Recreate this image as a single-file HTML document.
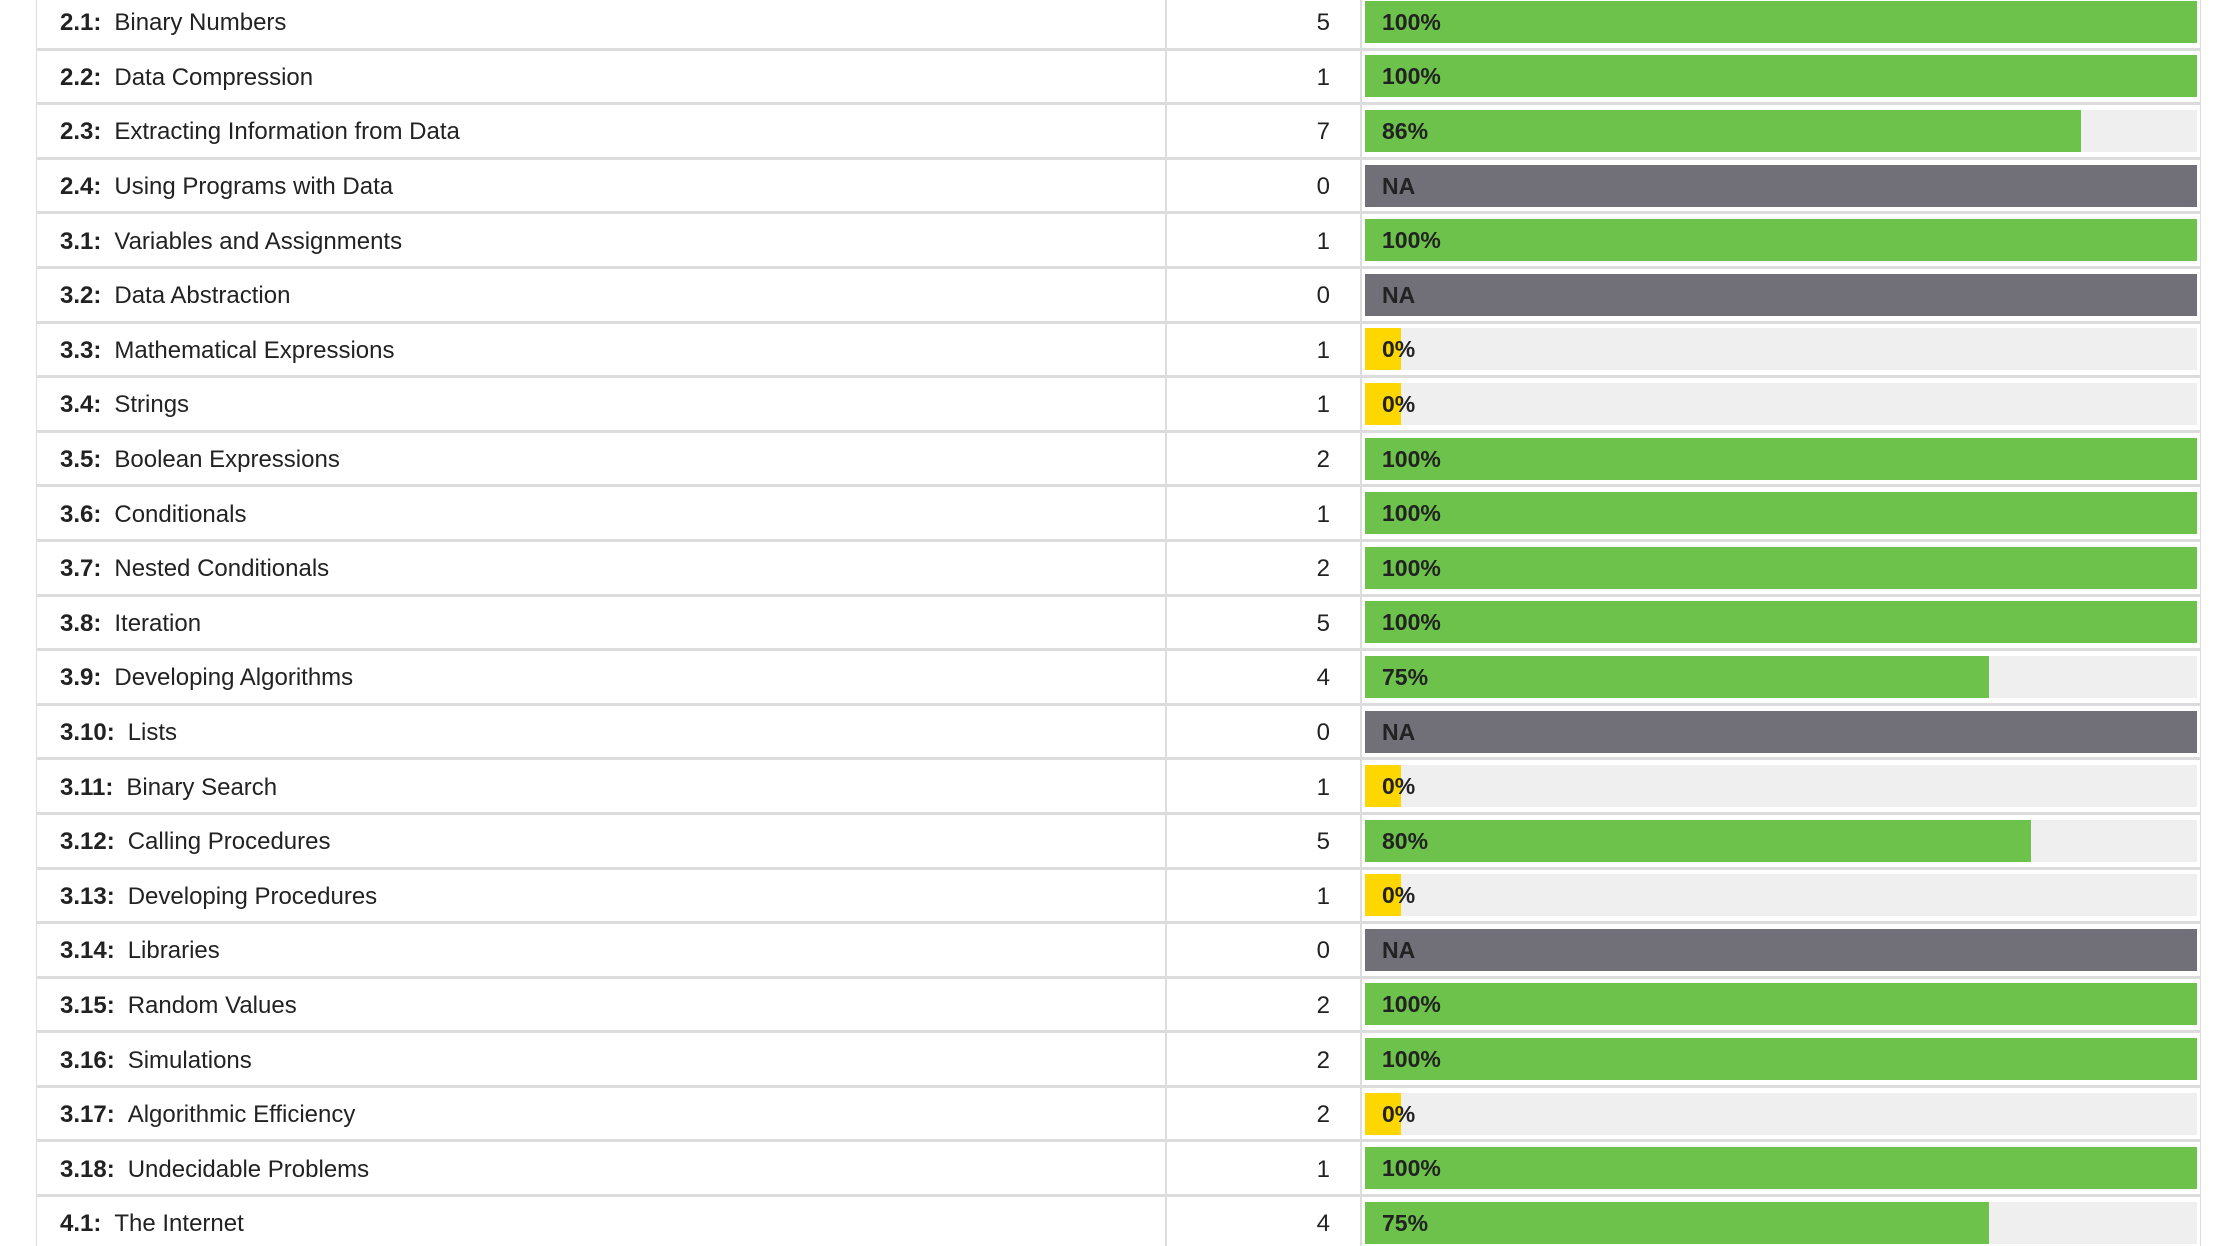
<!DOCTYPE html>
<html><head><meta charset="utf-8"><style>
html,body{margin:0;padding:0;background:#fff;width:2233px;height:1246px;overflow:hidden;font-family:"Liberation Sans",Arial,sans-serif;color:#222;}
.t{position:absolute;left:36px;top:-4px;width:2163px;height:1250px;overflow:hidden;border-left:1px solid #ddd;border-right:1px solid #ddd;}
.r{display:flex;height:51.6px;border-bottom:3px solid #dcdcdc;}
.r.last{border-bottom-color:#fff;}
.c1{display:flex;align-items:center;padding-left:23px;padding-top:3px;font-size:24px;box-sizing:border-box;width:1130px;border-right:2px solid #ddd;}
.c1 b{margin-right:13px;}
.c2{width:195px;border-right:2px solid #ddd;display:flex;align-items:center;justify-content:flex-end;padding-right:30px;padding-top:3px;box-sizing:border-box;font-size:24px;}
.c3{flex:1;display:flex;align-items:center;padding:0 3px 0 3px;}
.tr{position:relative;width:100%;height:42px;background:#efefef;}
.f{position:absolute;left:0;top:0;bottom:0;}
.g{background:#6cc24a}.y{background:#ffd700}.n{background:#717079}
.tr span{position:absolute;left:17px;top:0;line-height:42px;font-weight:bold;font-size:23px;color:#222;}
.cols{position:absolute;top:0;bottom:0;border-right:2px solid #ddd;}
</style></head><body><div class="t">
<div class="cols" style="left:0;width:1128px"></div><div class="cols" style="left:0;width:1323px"></div>
<div class="r"><div class="c1"><b>2.1:</b>Binary Numbers</div><div class="c2">5</div><div class="c3"><div class="tr"><div class="f g" style="width:100%"></div><span>100%</span></div></div></div>
<div class="r"><div class="c1"><b>2.2:</b>Data Compression</div><div class="c2">1</div><div class="c3"><div class="tr"><div class="f g" style="width:100%"></div><span>100%</span></div></div></div>
<div class="r"><div class="c1"><b>2.3:</b>Extracting Information from Data</div><div class="c2">7</div><div class="c3"><div class="tr"><div class="f g" style="width:86%"></div><span>86%</span></div></div></div>
<div class="r"><div class="c1"><b>2.4:</b>Using Programs with Data</div><div class="c2">0</div><div class="c3"><div class="tr"><div class="f n" style="width:100%"></div><span>NA</span></div></div></div>
<div class="r"><div class="c1"><b>3.1:</b>Variables and Assignments</div><div class="c2">1</div><div class="c3"><div class="tr"><div class="f g" style="width:100%"></div><span>100%</span></div></div></div>
<div class="r"><div class="c1"><b>3.2:</b>Data Abstraction</div><div class="c2">0</div><div class="c3"><div class="tr"><div class="f n" style="width:100%"></div><span>NA</span></div></div></div>
<div class="r"><div class="c1"><b>3.3:</b>Mathematical Expressions</div><div class="c2">1</div><div class="c3"><div class="tr"><div class="f y" style="width:36px"></div><span>0%</span></div></div></div>
<div class="r"><div class="c1"><b>3.4:</b>Strings</div><div class="c2">1</div><div class="c3"><div class="tr"><div class="f y" style="width:36px"></div><span>0%</span></div></div></div>
<div class="r"><div class="c1"><b>3.5:</b>Boolean Expressions</div><div class="c2">2</div><div class="c3"><div class="tr"><div class="f g" style="width:100%"></div><span>100%</span></div></div></div>
<div class="r"><div class="c1"><b>3.6:</b>Conditionals</div><div class="c2">1</div><div class="c3"><div class="tr"><div class="f g" style="width:100%"></div><span>100%</span></div></div></div>
<div class="r"><div class="c1"><b>3.7:</b>Nested Conditionals</div><div class="c2">2</div><div class="c3"><div class="tr"><div class="f g" style="width:100%"></div><span>100%</span></div></div></div>
<div class="r"><div class="c1"><b>3.8:</b>Iteration</div><div class="c2">5</div><div class="c3"><div class="tr"><div class="f g" style="width:100%"></div><span>100%</span></div></div></div>
<div class="r"><div class="c1"><b>3.9:</b>Developing Algorithms</div><div class="c2">4</div><div class="c3"><div class="tr"><div class="f g" style="width:75%"></div><span>75%</span></div></div></div>
<div class="r"><div class="c1"><b>3.10:</b>Lists</div><div class="c2">0</div><div class="c3"><div class="tr"><div class="f n" style="width:100%"></div><span>NA</span></div></div></div>
<div class="r"><div class="c1"><b>3.11:</b>Binary Search</div><div class="c2">1</div><div class="c3"><div class="tr"><div class="f y" style="width:36px"></div><span>0%</span></div></div></div>
<div class="r"><div class="c1"><b>3.12:</b>Calling Procedures</div><div class="c2">5</div><div class="c3"><div class="tr"><div class="f g" style="width:80%"></div><span>80%</span></div></div></div>
<div class="r"><div class="c1"><b>3.13:</b>Developing Procedures</div><div class="c2">1</div><div class="c3"><div class="tr"><div class="f y" style="width:36px"></div><span>0%</span></div></div></div>
<div class="r"><div class="c1"><b>3.14:</b>Libraries</div><div class="c2">0</div><div class="c3"><div class="tr"><div class="f n" style="width:100%"></div><span>NA</span></div></div></div>
<div class="r"><div class="c1"><b>3.15:</b>Random Values</div><div class="c2">2</div><div class="c3"><div class="tr"><div class="f g" style="width:100%"></div><span>100%</span></div></div></div>
<div class="r"><div class="c1"><b>3.16:</b>Simulations</div><div class="c2">2</div><div class="c3"><div class="tr"><div class="f g" style="width:100%"></div><span>100%</span></div></div></div>
<div class="r"><div class="c1"><b>3.17:</b>Algorithmic Efficiency</div><div class="c2">2</div><div class="c3"><div class="tr"><div class="f y" style="width:36px"></div><span>0%</span></div></div></div>
<div class="r"><div class="c1"><b>3.18:</b>Undecidable Problems</div><div class="c2">1</div><div class="c3"><div class="tr"><div class="f g" style="width:100%"></div><span>100%</span></div></div></div>
<div class="r last"><div class="c1"><b>4.1:</b>The Internet</div><div class="c2">4</div><div class="c3"><div class="tr"><div class="f g" style="width:75%"></div><span>75%</span></div></div></div>
</div></body></html>
